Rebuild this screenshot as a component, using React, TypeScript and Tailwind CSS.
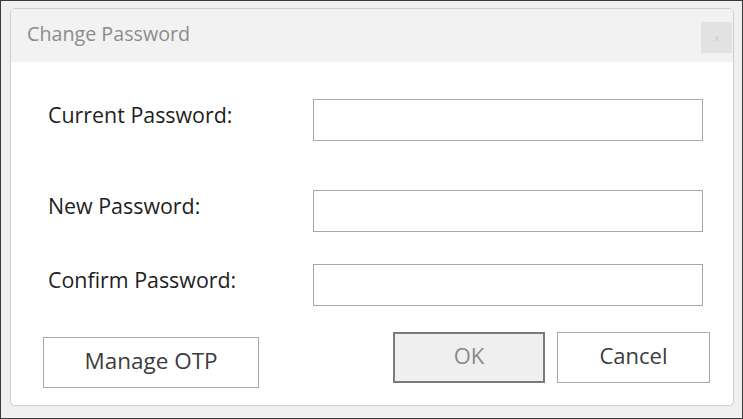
export default function App() {
  const font = { fontFamily: '"Open Sans", "Noto Sans", sans-serif' };

  return (
    <div
      className="w-[743px] h-[419px] bg-[#f0f0f0] border border-[#3a3a3a] pt-[7px] pl-[9px] overflow-hidden"
      style={font}
    >
      {/* Dialog window */}
      <div className="w-[724px] h-[398px] bg-white border border-[#cfcfcf] rounded-[5px] flex flex-col overflow-hidden">
        {/* Title bar */}
        <div className="h-[53px] bg-[#f2f2f2] flex items-center justify-between pl-[16px] pr-[1px]">
          <span className="text-[19.7px] text-[#8c8c8c] leading-none -mt-[3px]">Change Password</span>
          <div className="w-[31px] h-[31px] bg-[#e2e2e2] flex items-center justify-center text-[9px] text-[#c8c8c8] leading-none mt-[4px]">
            x
          </div>
        </div>

        {/* Body */}
        <div className="flex-1 flex flex-col pl-[37px] pt-[37px]">
          <div className="flex items-center h-[42px]">
            <span className="w-[265px] text-[21.4px] text-[#1e1e1e] leading-none -mt-[10px]">Current Password:</span>
            <input type="password" className="w-[390px] h-[42px] border border-[#a8a8a8] outline-none" />
          </div>

          <div className="flex items-center h-[42px] mt-[49px]">
            <span className="w-[265px] text-[21.4px] text-[#1e1e1e] leading-none -mt-[10px]">New Password:</span>
            <input type="password" className="w-[390px] h-[42px] border border-[#a8a8a8] outline-none" />
          </div>

          <div className="flex items-center h-[42px] mt-[32px]">
            <span className="w-[265px] text-[21.4px] text-[#1e1e1e] leading-none -mt-[10px]">Confirm Password:</span>
            <input type="password" className="w-[390px] h-[42px] border border-[#a8a8a8] outline-none" />
          </div>

          {/* Buttons */}
          <div className="flex items-start mt-[26px] -ml-[5px]">
            <button className="mt-[5px] w-[216px] h-[51px] border border-[#a8a8a8] bg-white text-[22.5px] text-[#3c3c3c] leading-none">
              <span className="relative -top-[1px]">Manage OTP</span>
            </button>
            <button className="ml-[134px] w-[152px] h-[51px] border-2 border-[#7a7a7a] bg-[#efefef] text-[22px] text-[#8a8a8a] leading-none">
              <span className="relative -top-[3px]">OK</span>
            </button>
            <button className="ml-[12px] w-[153px] h-[51px] border border-[#a8a8a8] bg-white text-[22px] text-[#3c3c3c] leading-none">
              <span className="relative -top-[3px]">Cancel</span>
            </button>
          </div>
        </div>
      </div>
    </div>
  );
}
